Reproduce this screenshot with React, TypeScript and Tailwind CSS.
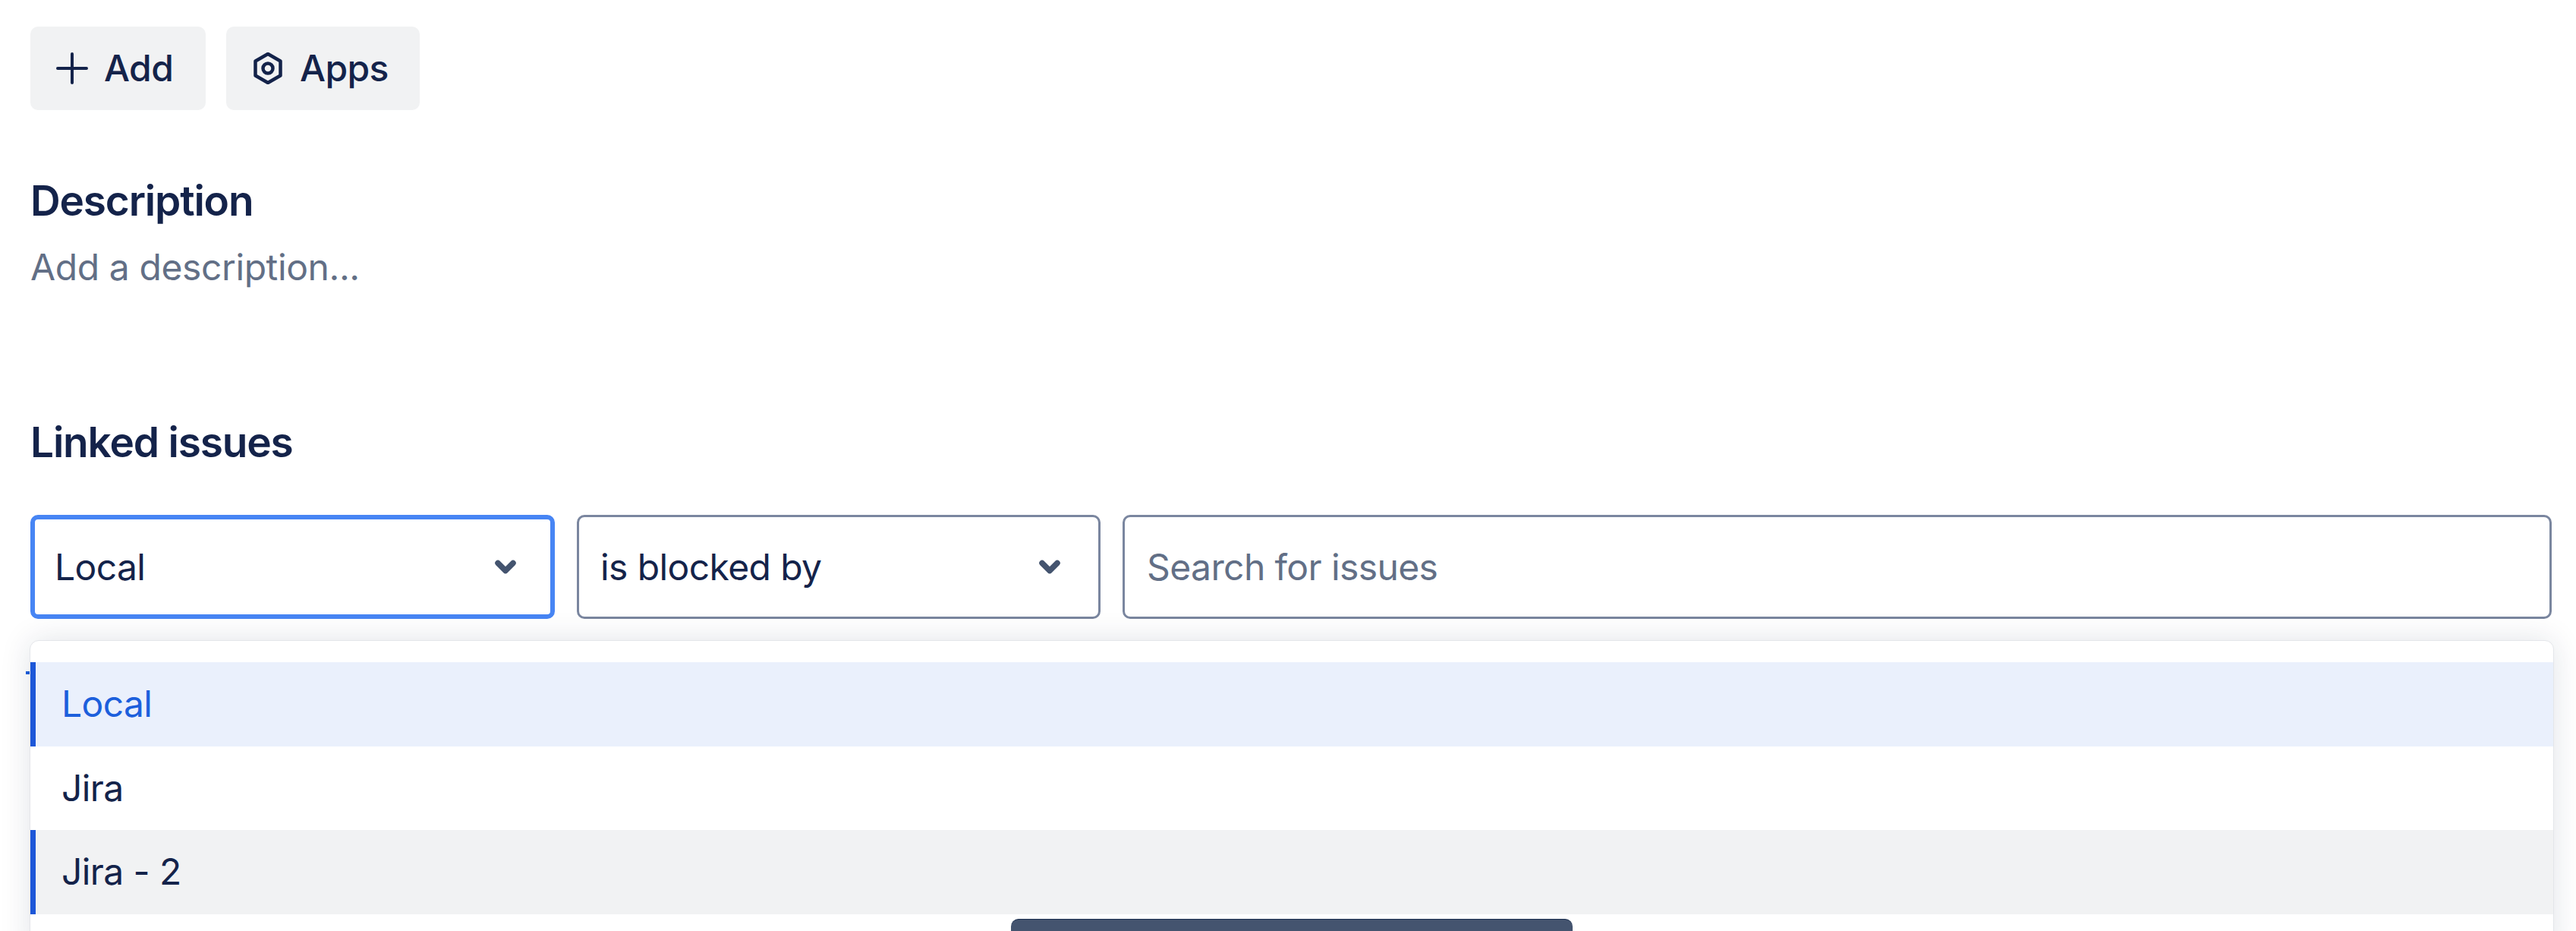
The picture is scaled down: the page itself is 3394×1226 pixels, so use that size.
import React from 'react'

const options = [
  { label: 'Local', rowClass: 'bg-[#eaf0fc] text-[#1c5fdc]', bar: true },
  { label: 'Jira', rowClass: 'bg-white text-[#14234a]', bar: false },
  { label: 'Jira - 2', rowClass: 'bg-[#f1f2f3] text-[#14234a]', bar: true },
]

const Chevron = () => (
  <svg width="28" height="19" viewBox="0 0 28 19" fill="none" className="shrink-0">
    <path d="M4 4.5 L14 14.5 L24 4.5" stroke="#44546f" strokeWidth="7.5" strokeLinecap="round" strokeLinejoin="round" />
  </svg>
)

const SelectBox = ({ label, focused }: { label: string; focused?: boolean }) => (
  <div
    className={
      focused
        ? 'flex h-[137px] w-[691px] shrink-0 items-center justify-between rounded-[10px] border-[6px] border-[#4785f4] bg-white pl-[26px] pr-[45px]'
        : 'flex h-[137px] w-[690px] shrink-0 items-center justify-between rounded-[10px] border-[3px] border-[#7a869f] bg-white pl-[28px] pr-[50px]'
    }
  >
    <span>{label}</span>
    <Chevron />
  </div>
)

const App = () => {
  return (
    <div
      className="relative h-[1226px] overflow-hidden bg-white pl-[40px] pt-[35px] text-[48px] tracking-[-0.6px] text-[#14234a]"
      style={{ fontFamily: 'Inter, sans-serif' }}
    >
      <div className="flex gap-[27px]">
        <button className="flex h-[110px] w-[231px] items-center rounded-[10px] bg-[#f1f2f3] pl-[34px] font-medium">
          <svg width="42" height="42" viewBox="0 0 42 42" fill="none" className="mr-[21px] shrink-0">
            <path d="M21 2 V40 M2 21 H40" stroke="#14234a" strokeWidth="4" strokeLinecap="round" />
          </svg>
          Add
        </button>
        <button className="flex h-[110px] w-[255px] items-center rounded-[10px] bg-[#f1f2f3] pl-[36px] font-medium">
          <svg width="38" height="42" viewBox="0 0 38 42" fill="none" className="mr-[23px] shrink-0">
            <path d="M19 2 L35.5 11.5 V30.5 L19 40 L2.5 30.5 V11.5 Z" stroke="#14234a" strokeWidth="4.5" strokeLinejoin="round" />
            <circle cx="19" cy="21" r="6.5" stroke="#14234a" strokeWidth="4.5" />
          </svg>
          Apps
        </button>
      </div>

      <h2 className="mt-[89px] text-[55px] font-semibold leading-[60px] tracking-[-1.2px]">Description</h2>
      <p className="mt-[28px] leading-[60px] tracking-[-0.4px] text-[#626f86]">Add a description...</p>

      <h2 className="mt-[170px] text-[55px] font-semibold leading-[60px] tracking-[-1.2px]">Linked issues</h2>

      <div className="mt-[66px] flex w-[3322px] gap-[29px]">
        <SelectBox label="Local" focused />
        <SelectBox label="is blocked by" />
        <div className="flex h-[137px] min-w-0 flex-1 items-center rounded-[10px] border-[3px] border-[#7a869f] bg-white pl-[29px] text-[#626f86]">
          Search for issues
        </div>
      </div>

      <div className="absolute left-[34px] top-[884px] h-[4px] w-[8px] bg-[#1c5fdc]" />

      <div className="absolute left-[39px] top-[843px] h-[420px] w-[3326px] overflow-hidden rounded-[12px] border border-[#e4e6ea] bg-white pt-[28px] shadow-[0_0_40px_rgba(9,30,66,0.12)]">
        {options.map(option => (
          <div key={option.label} className={`relative flex h-[110.5px] items-center pl-[41px] ${option.rowClass}`}>
            {option.bar && <div className="absolute bottom-0 left-0 top-0 w-[7px] bg-[#1d57d8]" />}
            {option.label}
          </div>
        ))}
      </div>

      <div className="absolute left-[1332px] top-[1210px] h-[40px] w-[740px] rounded-[10px] border-t border-[#1c3050] bg-[#44546f]" />
    </div>
  )
}

export default App
